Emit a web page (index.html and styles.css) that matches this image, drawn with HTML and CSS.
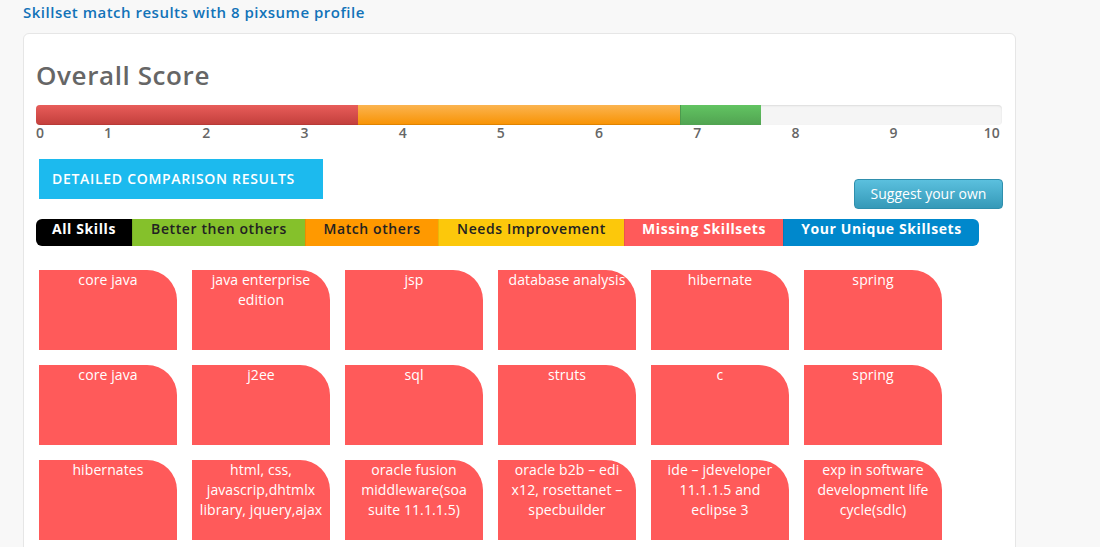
FILE: index.html
```html
<!DOCTYPE html>
<html>
<head>
<meta charset="utf-8">
<link rel="stylesheet" href="styles.css">
</head>
<body>
<div class="page">
  <h3 class="heading">Skillset match results with 8 pixsume profile</h3>
  <div class="card">
    <h2 class="title">Overall Score</h2>
    <div class="progress">
      <div class="seg seg-red" style="width:33.33%"></div>
      <div class="seg seg-orange" style="width:33.33%"></div>
      <div class="seg seg-green" style="width:8.4%"></div>
    </div>
    <div class="scale">
      <span class="zero">0</span><span>1</span><span>2</span><span>3</span><span>4</span><span>5</span><span>6</span><span>7</span><span>8</span><span>9</span><span>10</span>
    </div>
    <div class="actions">
      <div class="btn-detail">DETAILED COMPARISON RESULTS</div>
      <div class="btn-suggest">Suggest your own</div>
    </div>
    <div class="tabs">
      <div class="tab tab-all">All Skills</div>
      <div class="tab tab-better">Better then others</div>
      <div class="tab tab-match">Match others</div>
      <div class="tab tab-needs">Needs Improvement</div>
      <div class="tab tab-missing">Missing Skillsets</div>
      <div class="tab tab-unique">Your Unique Skillsets</div>
    </div>
    <div class="tiles">
      <div class="tile">core java</div>
      <div class="tile">java enterprise edition</div>
      <div class="tile">jsp</div>
      <div class="tile">database analysis</div>
      <div class="tile">hibernate</div>
      <div class="tile">spring</div>
      <div class="tile">core java</div>
      <div class="tile">j2ee</div>
      <div class="tile">sql</div>
      <div class="tile">struts</div>
      <div class="tile">c</div>
      <div class="tile">spring</div>
      <div class="tile">hibernates</div>
      <div class="tile">html, css, javascrip,dhtmlx library, jquery,ajax</div>
      <div class="tile">oracle fusion middleware(soa suite 11.1.1.5)</div>
      <div class="tile">oracle b2b – edi x12, rosettanet – specbuilder</div>
      <div class="tile">ide – jdeveloper 11.1.1.5 and eclipse 3</div>
      <div class="tile">exp in software development life cycle(sdlc)</div>
    </div>
  </div>
</div>
</body>
</html>
```

FILE: styles.css
```css
* { box-sizing: border-box; }
html, body {
  margin: 0;
  padding: 0;
  background: #f8f8f8;
  font-family: "Open Sans", "DejaVu Sans", sans-serif;
}
.page {
  padding: 2px 0 0 23px;
  width: 1016px;
}
.heading {
  margin: 0;
  font-size: 15px;
  font-weight: 600;
  line-height: 20px;
  color: #1273b8;
  letter-spacing: 0.5px;
}
.card {
  margin-top: 11px;
  width: 993px;
  height: 560px;
  background: #fff;
  border: 1px solid #e6e6e6;
  border-radius: 6px;
  padding: 22px 12px 0 12px;
}
.title {
  margin: 0;
  font-size: 26px;
  font-weight: 600;
  color: #666;
  line-height: 38px;
  letter-spacing: 0.6px;
}
.progress {
  margin-top: 11px;
  width: 966px;
  height: 20px;
  border-radius: 4px;
  background: #f5f5f5;
  box-shadow: inset 0 1px 2px rgba(0,0,0,0.1);
  display: flex;
  overflow: hidden;
}
.seg { height: 100%; }
.seg-red {
  background: linear-gradient(#e85d5a, #c4403d);
  border-bottom: 1px solid #b83a37;
}
.seg-orange {
  background: linear-gradient(#fbb450, #f89406);
  border-bottom: 1px solid #e08300;
}
.seg-green {
  background: linear-gradient(#62c462, #51a351);
  border-left: 1px solid #4d9a4d;
}
.scale {
  display: grid;
  grid-template-columns: 23px repeat(10, 98.2px);
  font-size: 14px;
  font-weight: 600;
  color: #666;
  line-height: 16px;
  height: 16px;
  margin-top: 0;
}
.scale span { text-align: center; }
.scale .zero { text-align: left; }
.actions {
  margin-top: 18px;
  display: flex;
  justify-content: space-between;
  align-items: flex-start;
  width: 967px;
}
.btn-detail {
  margin-left: 3px;
  width: 284px;
  height: 40px;
  background: #1cbaee;
  color: #fff;
  font-size: 14px;
  font-weight: 600;
  letter-spacing: 0.7px;
  line-height: 40px;
  padding-left: 13px;
}
.btn-suggest {
  margin-top: 20px;
  width: 149px;
  height: 30px;
  border-radius: 4px;
  background: linear-gradient(#5bc0de, #3599b8);
  border: 1px solid #2f8fad;
  color: #fff;
  font-size: 14px;
  line-height: 28px;
  text-align: center;
}
.tabs {
  margin-top: 10px;
  display: flex;
  height: 27px;
}
.tab {
  height: 27px;
  font-size: 14px;
  font-weight: 700;
  letter-spacing: 0.6px;
  line-height: 20px;
  text-align: center;
  padding-top: 0;
  border-left: 1px solid rgba(0,0,0,0.08);
}
.tab-all {
  width: 96px;
  background: #000;
  color: #fff;
  border-radius: 6px 0 0 6px;
  border-left: none;
}
.tab-better { width: 173px; background: #85c12b; color: #222; font-weight: 600; }
.tab-match { width: 133px; background: #ff9900; color: #222; font-weight: 600; }
.tab-needs { width: 186px; background: #fcc80b; color: #222; font-weight: 600; }
.tab-missing { width: 159px; background: #ff5a5a; color: #fff; }
.tab-unique {
  width: 196px;
  background: #0088cc;
  color: #fff;
  border-radius: 0 6px 6px 0;
}
.tiles {
  margin-top: 24px;
  padding-left: 3px;
  display: grid;
  grid-template-columns: repeat(6, 138px);
  column-gap: 15px;
  row-gap: 15px;
}
.tile {
  height: 80px;
  background: #ff5a5a;
  border-top-right-radius: 30px;
  color: #fff;
  font-size: 14px;
  line-height: 20px;
  letter-spacing: 0.1px;
  text-align: center;
  padding: 0 5px;
}
```
